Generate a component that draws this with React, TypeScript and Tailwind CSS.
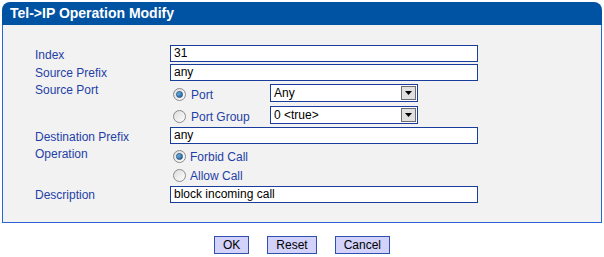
import React from 'react'

const font = { fontFamily: '"Liberation Sans", Arial, sans-serif' }

function Radio({ checked }: { checked?: boolean }) {
  return (
    <span className="relative inline-flex h-[13px] w-[13px] shrink-0 items-center justify-center rounded-full border border-[#8a8a8a] bg-gradient-to-br from-[#dcdcdc] to-[#ffffff]">
      {checked && (
        <span className="h-[7px] w-[7px] rounded-full bg-gradient-to-br from-[#7fc6f0] to-[#1b5e9c] border border-[#1d4f7e]" />
      )}
    </span>
  )
}

function TextInput({ value }: { value: string }) {
  return (
    <div className="h-[17px] w-[308px] border border-[#1a3d9c] bg-white pl-[3px] text-[12px] leading-[15px] text-black">
      {value}
    </div>
  )
}

function Select({ value }: { value: string }) {
  return (
    <div className="flex h-[18px] w-[148px] items-center justify-between border border-[#1a3d9c] bg-white pl-[3px] pr-[1px] text-[12px] leading-[15px] text-black">
      <span>{value}</span>
      <span className="flex h-[14px] w-[15px] items-center justify-center border border-[#6c6c6c] bg-[#e0e0e0]">
        <svg width="7" height="4" viewBox="0 0 7 4">
          <path d="M0 0h7L3.5 4z" fill="#000" />
        </svg>
      </span>
    </div>
  )
}

function Label({ children }: { children: React.ReactNode }) {
  return <div className="w-[135px] shrink-0 text-[12px] text-[#1f3fa6]">{children}</div>
}

export default function App() {
  return (
    <div className="h-[257px] w-[604px] bg-white px-[2px] pt-[2px]" style={font}>
      <div className="h-[23px] rounded-t-[8px] bg-[#0052a3] pl-[8px] text-[14px] font-bold leading-[23px] text-white">
        Tel-&gt;IP Operation Modify
      </div>
      <div className="h-[198px] border border-t-0 border-[#2d62d6] bg-[#f2f2f2] pl-[32px] pt-[20px]">
        <div className="flex h-[19px] items-start">
          <Label><span className="block pt-[1px]">Index</span></Label>
          <TextInput value="31" />
        </div>
        <div className="flex h-[20px] items-start">
          <Label><span className="block">Source Prefix</span></Label>
          <TextInput value="any" />
        </div>
        <div className="flex h-[43px] items-start">
          <Label><span className="block leading-[13px]">Source Port</span></Label>
          <div className="flex flex-col gap-[4px]">
            <div className="flex h-[18px] items-center">
              <div className="flex w-[100px] items-center gap-[5px] pl-[3px] pt-[3px] text-[12px] text-[#1f3fa6]">
                <Radio checked />
                <span>Port</span>
              </div>
              <Select value="Any" />
            </div>
            <div className="flex h-[18px] items-center">
              <div className="flex w-[100px] items-center gap-[5px] pl-[3px] pt-[3px] text-[12px] text-[#1f3fa6]">
                <Radio />
                <span>Port Group</span>
              </div>
              <Select value="0 <true>" />
            </div>
          </div>
        </div>
        <div className="flex h-[20px] items-start">
          <Label><span className="block pt-[1px]">Destination Prefix</span></Label>
          <TextInput value="any" />
        </div>
        <div className="flex h-[39px] items-start">
          <Label><span className="block leading-[14px]">Operation</span></Label>
          <div className="flex flex-col gap-[6px] pl-[3px] pt-[3px] text-[12px] text-[#1f3fa6]">
            <div className="flex h-[13px] items-center gap-[4px]">
              <Radio checked />
              <span>Forbid Call</span>
            </div>
            <div className="flex h-[13px] items-center gap-[4px]">
              <Radio />
              <span>Allow Call</span>
            </div>
          </div>
        </div>
        <div className="flex h-[19px] items-start">
          <Label><span className="block">Description</span></Label>
          <TextInput value="block incoming call" />
        </div>
      </div>
      <div className="flex justify-center gap-[18px] pt-[13px]">
        {['OK', 'Reset', 'Cancel'].map((b) => (
          <button
            key={b}
            className="h-[18px] border border-[#3050b0] bg-[#d2d2fa] px-[8px] text-[12px] leading-[16px] text-black"
          >
            {b}
          </button>
        ))}
      </div>
    </div>
  )
}
